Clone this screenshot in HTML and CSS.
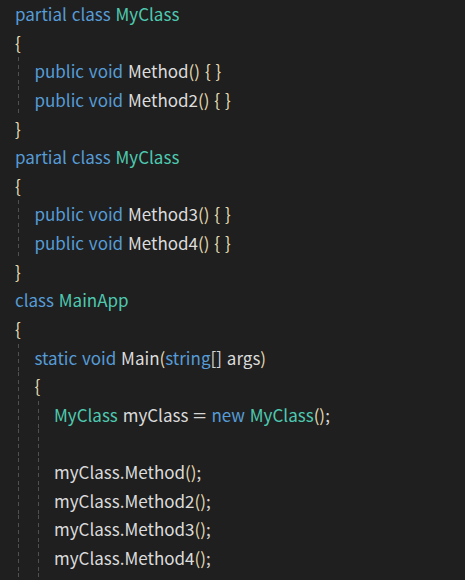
FILE: index.html
```html
<!DOCTYPE html>
<html>
<head>
<meta charset="utf-8">
<link rel="stylesheet" href="styles.css">
</head>
<body>
<div class="code">
<div class="ln"><span class="kw">partial class</span> <span class="ty">MyClass</span></div>
<div class="ln"><span class="br">{</span></div>
<div class="ln"><span class="ind"></span><span class="kw">public void</span> <span class="fn">Method</span><span class="br">()</span> <span class="br">{ }</span></div>
<div class="ln"><span class="ind"></span><span class="kw">public void</span> <span class="fn">Method2</span><span class="br">()</span> <span class="br">{ }</span></div>
<div class="ln"><span class="br">}</span></div>
<div class="ln"><span class="kw">partial class</span> <span class="ty">MyClass</span></div>
<div class="ln"><span class="br">{</span></div>
<div class="ln"><span class="ind"></span><span class="kw">public void</span> <span class="fn">Method3</span><span class="br">()</span> <span class="br">{ }</span></div>
<div class="ln"><span class="ind"></span><span class="kw">public void</span> <span class="fn">Method4</span><span class="br">()</span> <span class="br">{ }</span></div>
<div class="ln"><span class="br">}</span></div>
<div class="ln"><span class="kw">class</span> <span class="ty">MainApp</span></div>
<div class="ln"><span class="br">{</span></div>
<div class="ln"><span class="ind"></span><span class="kw">static void</span> <span class="fn">Main</span><span class="br">(</span><span class="kw">string</span><span class="tx">[]</span> <span class="var">args</span><span class="br">)</span></div>
<div class="ln"><span class="ind"></span><span class="br">{</span></div>
<div class="ln"><span class="ind"></span><span class="ind"></span><span class="ty">MyClass</span> <span class="var">myClass</span> <span class="tx sp">=</span> <span class="kw">new</span> <span class="ty">MyClass</span><span class="br">()</span><span class="tx">;</span></div>
<div class="ln"><span class="ind"></span><span class="ind"></span></div>
<div class="ln"><span class="ind"></span><span class="ind"></span><span class="var">myClass</span><span class="tx">.</span><span class="fn">Method</span><span class="br">()</span><span class="tx">;</span></div>
<div class="ln"><span class="ind"></span><span class="ind"></span><span class="var">myClass</span><span class="tx">.</span><span class="fn">Method2</span><span class="br">()</span><span class="tx">;</span></div>
<div class="ln"><span class="ind"></span><span class="ind"></span><span class="var">myClass</span><span class="tx">.</span><span class="fn">Method3</span><span class="br">()</span><span class="tx">;</span></div>
<div class="ln"><span class="ind"></span><span class="ind"></span><span class="var">myClass</span><span class="tx">.</span><span class="fn">Method4</span><span class="br">()</span><span class="tx">;</span></div>
<div class="ln"><span class="ind"></span><span class="ind"></span></div>
</div>
</body>
</html>
```
FILE: styles.css
```css
html, body {
  margin: 0;
  padding: 0;
  background: #1f1f1f;
  overflow: hidden;
}
.code {
  padding: 0 0 0 15px;
  font-family: "Noto Sans CJK JP", "Liberation Sans", sans-serif;
  font-size: 17px;
  color: #d4d4d4;
  word-spacing: 1px;
}
.ln {
  display: block;
  white-space: pre;
  height: 28.63px;
  line-height: 28.63px;
}
.ind {
  display: inline-block;
  vertical-align: top;
  width: 19.5px;
  height: 28.63px;
  background: repeating-linear-gradient(to bottom, #505050 0 4px, transparent 4px 7.7px);
  background-size: 1px 100%;
  background-repeat: no-repeat;
  background-position: 3px 0;
}
.sp { display: inline-block; transform: scaleX(1.4); margin: 0 2px; }
.kw { color: #569cd6; }
.ty { color: #4ec9b0; }
.fn { color: #dcdcdc; }
.var { color: #dadada; }
.br { color: #e2d8b0; }
.tx { color: #d4d4d4; }
```
